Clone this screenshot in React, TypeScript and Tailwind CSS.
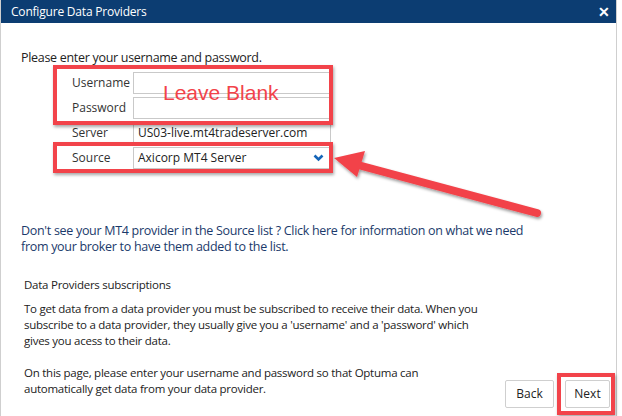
import React from 'react';

const font = { fontFamily: '"Open Sans", "Liberation Sans", sans-serif' };

const Row: React.FC<{ label: string; children?: React.ReactNode }> = ({ label, children }) => (
  <div className="flex h-[25px] items-center">
    <div className="w-[61px] text-[12px] text-[#333]">{label}</div>
    <div className="flex h-[22px] w-[198px] items-center border border-[#c9c9c9] px-[4px] text-[12px] text-[#222]">
      {children}
    </div>
  </div>
);

const App: React.FC = () => {
  return (
    <div className="relative h-[416px] w-[622px] overflow-hidden bg-white" style={font}>
      <div className="flex h-full w-[617px] flex-col border-r border-l border-[#cfcfcf]">
        {/* Title bar */}
        <div className="flex h-[23px] items-center justify-between bg-[#0c3d72] pl-[10px] pr-[6px] text-white">
          <span className="text-[12px] tracking-[-0.2px]">Configure Data Providers</span>
          <span className="text-[14px] font-bold leading-none">✕</span>
        </div>

        <div className="px-[20px] pt-[26px]">
          <p className="text-[12.5px] tracking-[-0.3px] text-[#222]">Please enter your username and password.</p>

          <div className="mt-[3px] ml-[51px] flex flex-col">
            <Row label="Username" />
            <Row label="Password" />
            <Row label="Server">US03-live.mt4tradeserver.com</Row>
            <Row label="Source">
              <span className="flex-1">Axicorp MT4 Server</span>
              <svg width="11" height="8" viewBox="0 0 11 8" className="mr-[2px]">
                <path d="M1.5 1.5 L5.5 5.5 L9.5 1.5" stroke="#1565b8" strokeWidth="2.6" fill="none" />
              </svg>
            </Row>
          </div>

          <p className="mt-[52px] text-[12.5px] leading-[16px] tracking-[-0.3px] text-[#1b3a6b]">
            Don't see your MT4 provider in the Source list ? Click here for information on what we need
            <br />
            from your broker to have them added to the list.
          </p>
        </div>

        <div className="flex flex-1 items-end justify-between pl-[23px] pr-[6px] pb-[8px]">
          <div className="pb-[11px] text-[11.5px] leading-[16px] tracking-[-0.25px] text-[#222]">
            <p>Data Providers subscriptions</p>
            <p className="mt-[8px]">
              To get data from a data provider you must be subscribed to receive their data. When you
              <br />
              subscribe to a data provider, they usually give you a 'username' and a 'password' which
              <br />
              gives you acess to their data.
            </p>
            <p className="mt-[16px]">
              On this page, please enter your username and password so that Optuma can
              <br />
              automatically get data from your data provider.
            </p>
          </div>
          <div className="flex gap-[11px]">
            <button className="h-[28px] w-[49px] rounded-[2px] border border-[#cfcfcf] bg-white text-[12px] text-[#222]">
              Back
            </button>
            <button className="h-[28px] w-[45px] rounded-[2px] border border-[#cfcfcf] bg-white text-[12px] text-[#222]">
              Next
            </button>
          </div>
        </div>
      </div>

      {/* Annotations */}
      <div className="absolute left-[53px] top-[65px] h-[60px] w-[280px] border-[4px] border-[#f2434a] shadow-[1px_2px_3px_rgba(0,0,0,0.35)]" />
      <div className="absolute left-[53px] top-[142px] h-[31px] w-[280px] border-[4px] border-[#f2434a] shadow-[1px_2px_3px_rgba(0,0,0,0.35)]" />
      <div className="absolute left-[557px] top-[373px] h-[42px] w-[58px] border-[4px] border-[#f2434a] shadow-[1px_2px_3px_rgba(0,0,0,0.35)]" />
      <span
        className="absolute left-[163px] top-[80px] text-[21px] leading-[26px] text-[#f2434a]"
        style={{ fontFamily: '"Liberation Sans", Arial, sans-serif' }}
      >
        Leave Blank
      </span>
      <svg className="absolute left-0 top-0" width="622" height="416" viewBox="0 0 622 416">
        <defs>
          <filter id="sh" x="-10%" y="-30%" width="120%" height="160%">
            <feDropShadow dx="1" dy="2" stdDeviation="1.5" floodColor="#000" floodOpacity="0.4" />
          </filter>
        </defs>
        <g filter="url(#sh)">
          <line x1="358" y1="165" x2="537" y2="213" stroke="#f2434a" strokeWidth="8" strokeLinecap="round" />
          <polygon points="334,158 365,151 357,177" fill="#f2434a" />
        </g>
      </svg>
    </div>
  );
};

export default App;
